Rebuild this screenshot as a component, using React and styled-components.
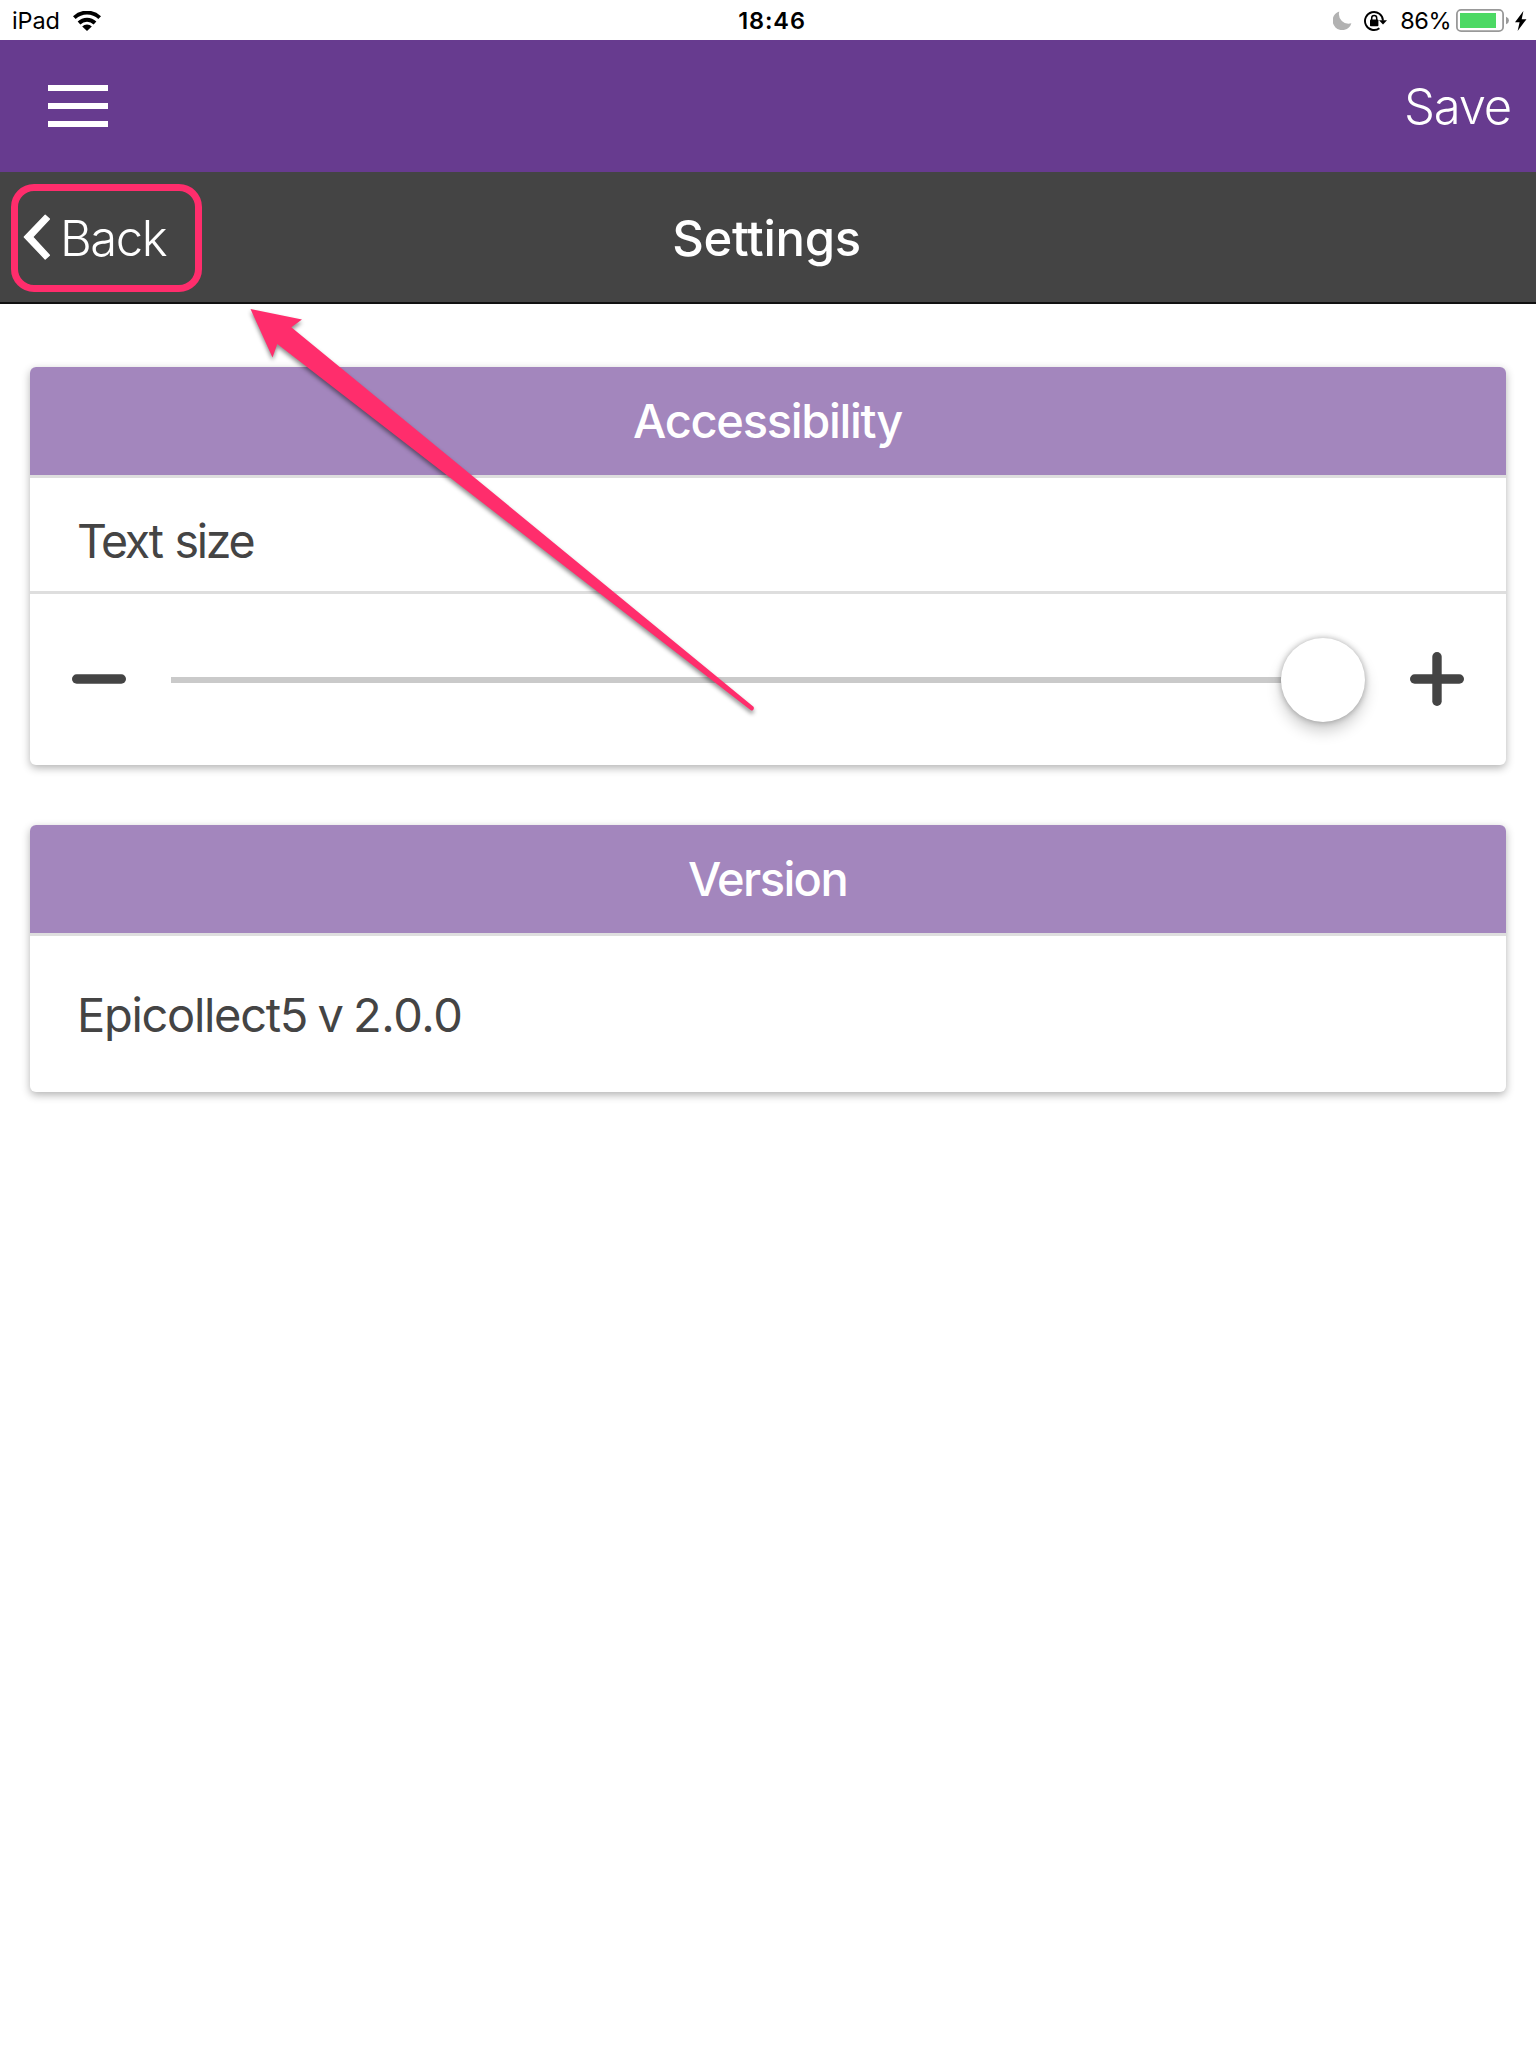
import React from "react";
import styled, { createGlobalStyle } from "styled-components";

const GlobalStyle = createGlobalStyle`
  *, *::before, *::after { box-sizing: border-box; }
  body {
    margin: 0;
    background: #fff;
    color: #444;
    font-family: Inter, "Liberation Sans", sans-serif;
  }
`;

const Screen = styled.div`
  position: relative;
  width: 1536px;
  height: 2048px;
  display: flex;
  flex-direction: column;
  overflow: hidden;
`;

const StatusBar = styled.div`
  height: 40px;
  padding: 1px 9px 0 12px;
  display: grid;
  grid-template-columns: 1fr auto 1fr;
  align-items: center;
  background: #fff;
  color: #000;
  font-size: 23.5px;
  line-height: 28px;
`;

const StatusGroup = styled.div`
  display: flex;
  align-items: center;
  justify-content: ${(p) => (p.$end ? "flex-end" : "flex-start")};
`;

const StatusText = styled.span`
  font-weight: ${(p) => p.$weight || 400};
  letter-spacing: ${(p) => p.$tracking || 0}px;
  margin-right: ${(p) => p.$gap || 0}px;
`;

const Clock = styled.span`
  padding-left: 5px;
  font-weight: 600;
  letter-spacing: 0.9px;
`;

const StatusIcon = styled.svg`
  display: block;
  flex: none;
  margin-right: ${(p) => p.$gap || 0}px;
`;

const Toolbar = styled.header`
  height: 132px;
  padding: 0 25px 0 48px;
  display: flex;
  align-items: center;
  justify-content: space-between;
  background: #673b8f;
  color: #fff;
`;

const MenuButton = styled.button`
  width: 60px;
  padding: 0;
  border: 0;
  background: none;
  display: flex;
  flex-direction: column;
  gap: 12px;
`;

const MenuBar = styled.span`
  height: 6px;
  background: #fff;
`;

const BarLabel = styled.span`
  padding-top: 2px;
  font-size: 49px;
  line-height: 60px;
  font-weight: 300;
  letter-spacing: ${(p) => p.$tracking || 0}px;
`;

const NavBar = styled.nav`
  height: 132px;
  padding: 0 24px 0 23px;
  display: grid;
  grid-template-columns: 1fr auto 1fr;
  align-items: center;
  background: #444;
  border-bottom: 2px solid #111;
  color: #fff;
`;

const BackButton = styled.div`
  position: relative;
  display: flex;
  align-items: center;
  gap: 10px;
  justify-self: start;
  padding-top: 1px;
`;

const Chevron = styled.svg`
  display: block;
  margin-bottom: 2px;
`;

const Highlight = styled.span`
  position: absolute;
  left: -12px;
  top: -22px;
  width: 191px;
  height: 108px;
  border: 7px solid #ff2d6c;
  border-radius: 23px;
`;

const Title = styled.h1`
  margin: 0;
  padding: 4px 2px 0 0;
  font-size: 49px;
  line-height: 60px;
  font-weight: 500;
  letter-spacing: ${(p) => p.$tracking || 0}px;
`;

const Content = styled.main`
  padding: 63px 30px 0;
  display: flex;
  flex-direction: column;
  gap: 60px;
`;

const Card = styled.section`
  background: #fff;
  border-radius: 6px;
  box-shadow: 0 3px 9px rgba(0, 0, 0, 0.3);
  overflow: hidden;
`;

const CardHeader = styled.h2`
  margin: 0;
  height: 111px;
  padding: 0 1px 2px 0;
  display: flex;
  align-items: center;
  justify-content: center;
  background: #a386bd;
  border-bottom: 3px solid #dedede;
  color: #fff;
  font-size: 47px;
  font-weight: 500;
  letter-spacing: ${(p) => p.$tracking || 0}px;
`;

const TextRow = styled.div`
  height: ${(p) => p.$height}px;
  padding: ${(p) => p.$drop || 0}px 47px 0;
  display: flex;
  align-items: center;
  border-bottom: ${(p) => (p.$divided ? "3px solid #dedede" : "0")};
  font-size: ${(p) => p.$size || 47}px;
  letter-spacing: ${(p) => p.$tracking || 0}px;
  word-spacing: ${(p) => p.$wordGap || 0}px;
  white-space: pre;
`;

const VersionNumber = styled.span`
  letter-spacing: -0.4px;
`;

const SliderRow = styled.div`
  height: 171px;
  padding: 0 42px;
  display: flex;
  align-items: center;
  gap: 45px;
`;

const Track = styled.div`
  flex: 1;
  height: 84px;
  display: flex;
  align-items: center;
`;

const TrackLine = styled.div`
  flex: 1;
  height: 6px;
  background: #cacaca;
`;

const Knob = styled.div`
  width: 84px;
  height: 84px;
  border-radius: 50%;
  background: #fff;
  box-shadow: 0 0 6px rgba(0, 0, 0, 0.3), 0 9px 15px rgba(0, 0, 0, 0.2);
`;

const StepIcon = styled.svg`
  display: block;
  margin-bottom: 1px;
`;

const Arrow = styled.svg`
  position: absolute;
  left: 0;
  top: 0;
  pointer-events: none;
  filter: drop-shadow(0 3px 2px rgba(0, 0, 0, 0.45));
`;

function Wifi() {
  return (
    <StatusIcon width="28" height="20" viewBox="0 0 28 20">
      <g fill="none" stroke="#000" strokeWidth="3.9">
        <path d="M1.3 6.7 A18.3 18.3 0 0 1 26.7 6.7" />
        <path d="M6 12 A11.5 11.5 0 0 1 22 12" />
      </g>
      <path d="M14 20 L9.2 15.4 A6.8 6.8 0 0 1 18.8 15.4 Z" />
    </StatusIcon>
  );
}

function Moon() {
  return (
    <StatusIcon $gap={12} width="19" height="19" viewBox="0 0 19 19">
      <path fill="#b2b2b2" d="M6.3 .4 A9.6 9.6 0 1 0 18.4 12.3 A9.7 9.7 0 0 1 6.3 .4 Z" />
    </StatusIcon>
  );
}

function RotationLock() {
  return (
    <StatusIcon $gap={13} width="23" height="20" viewBox="0 0 23 20">
      <path d="M15.4 17.2 A9 9 0 1 1 19 9.6" fill="none" stroke="#000" strokeWidth="1.9" />
      <path d="M15 9.3 H23 L19 13.6 Z" />
      <rect x="6" y="8.4" width="8.4" height="6.8" rx=".8" />
      <path d="M7.7 9 V6.9 a2.5 2.5 0 0 1 5 0 V9" fill="none" stroke="#000" strokeWidth="1.5" />
    </StatusIcon>
  );
}

function Battery() {
  return (
    <StatusIcon $gap={6} width="53" height="23" viewBox="0 0 53 23">
      <rect x=".9" y=".9" width="46.2" height="21.2" rx="4.2" fill="none" stroke="#999" strokeWidth="1.8" />
      <rect x="4" y="4" width="36" height="15" fill="#4cd964" />
      <path d="M50 7.7 Q53 9 53 11.5 T50 15.3 Z" fill="#999" />
    </StatusIcon>
  );
}

function Bolt() {
  return (
    <StatusIcon width="12" height="20" viewBox="0 0 12 20">
      <path d="M8.4 0 L0 11.2 H4.6 L2.6 20 L11.5 8.2 H6.7 Z" />
    </StatusIcon>
  );
}

function Minus() {
  return (
    <StepIcon width="54" height="54" viewBox="0 0 54 54">
      <rect y="22.3" width="54" height="9.4" rx="4.7" fill="#444" />
    </StepIcon>
  );
}

function Plus() {
  return (
    <StepIcon width="54" height="54" viewBox="0 0 54 54">
      <rect y="22.3" width="54" height="9.4" rx="4.7" fill="#444" />
      <rect x="22.3" width="9.4" height="54" rx="4.7" fill="#444" />
    </StepIcon>
  );
}

export default function App() {
  return (
    <Screen>
      <GlobalStyle />
      <StatusBar>
        <StatusGroup>
          <StatusText $gap={13} $tracking={-0.1}>iPad</StatusText>
          <Wifi />
        </StatusGroup>
        <Clock>18:46</Clock>
        <StatusGroup $end>
          <Moon />
          <RotationLock />
          <StatusText $gap={5} $tracking={-0.5}>86%</StatusText>
          <Battery />
          <Bolt />
        </StatusGroup>
      </StatusBar>

      <Toolbar>
        <MenuButton aria-label="Menu">
          <MenuBar />
          <MenuBar />
          <MenuBar />
        </MenuButton>
        <BarLabel $tracking={-1.2}>Save</BarLabel>
      </Toolbar>

      <NavBar>
        <BackButton>
          <Chevron width="27" height="46" viewBox="0 0 27 46">
            <path
              d="M1.3 23 L22.2 1.2 L26.4 5 L9.6 23 L26.4 41.2 L22.2 45 Z"
              fill="#fff"
              stroke="#fff"
              strokeWidth="1.3"
              strokeLinejoin="round"
            />
          </Chevron>
          <BarLabel $tracking={-1.5}>Back</BarLabel>
          <Highlight />
        </BackButton>
        <Title $tracking={-0.3}>Settings</Title>
      </NavBar>

      <Content>
        <Card>
          <CardHeader $tracking={-1.3}>Accessibility</CardHeader>
          <TextRow $height={116} $drop={13} $divided $size={46.5} $tracking={-2.3} $wordGap={2}>
            Text size
          </TextRow>
          <SliderRow>
            <Minus />
            <Track>
              <TrackLine />
              <Knob />
            </Track>
            <Plus />
          </SliderRow>
        </Card>
        <Card>
          <CardHeader $tracking={-1.6}>Version</CardHeader>
          <TextRow $height={156} $tracking={-1.3} $wordGap={-1.5}>
            {"Epicollect5 v "}
            <VersionNumber>2.0.0</VersionNumber>
          </TextRow>
        </Card>
      </Content>

      <Arrow width="800" height="740" viewBox="0 0 800 740">
        <path
          d="M250.5 309 L302 319.5 L291.3 327.3 L753.5 706.8 Q754.5 708.5 753 710 Q752 711 750.5 710 L277.3 344 L272.5 357.5 Z"
          fill="#ff2d6c"
        />
      </Arrow>
    </Screen>
  );
}
